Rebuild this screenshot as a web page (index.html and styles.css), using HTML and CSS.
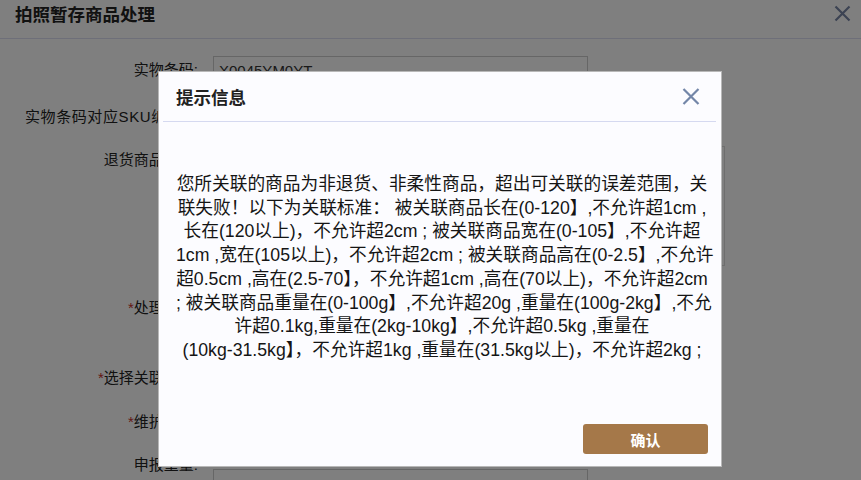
FILE: index.html
```html
<!DOCTYPE html>
<html lang="zh-CN">

<head>
    <meta charset="UTF-8">
    <meta name="viewport" content="width=device-width, initial-scale=1.0">
    <title>拍照暂存商品处理</title>
    <link rel="stylesheet" href="styles.css">
</head>

<body>
    <div class="page">
        <div class="page-head">
            <h3 class="page-title">拍照暂存商品处理</h3>
            <span class="page-close">
                <svg width="17" height="17" viewBox="0 0 17 17"><path d="M1.5 1.5L15.5 15.5M15.5 1.5L1.5 15.5" stroke="#7886a6" stroke-width="2.2" fill="none"/></svg>
            </span>
        </div>

        <form class="form">
            <div class="row row-a">
                <label class="label">实物条码:</label>
                <div class="field"><input class="input" type="text" value="X0045YM0YT" readonly></div>
            </div>
            <div class="row">
                <label class="label label-long">实物条码对应SKU编码：</label>
                <div class="field"><input class="input" type="text" readonly></div>
            </div>
            <div class="row row-pics">
                <label class="label">退货商品图片:</label>
                <div class="field"><div class="pics"></div></div>
            </div>
            <div class="row row-wide">
                <label class="label"><i class="req">*</i>处理方式:</label>
                <div class="field"><input class="input" type="text" readonly></div>
            </div>
            <div class="row row-b">
                <label class="label"><i class="req">*</i>选择关联商品:</label>
                <div class="field"><input class="input" type="text" readonly></div>
            </div>
            <div class="row">
                <label class="label"><i class="req">*</i>维护尺寸:</label>
                <div class="field"><input class="input" type="text" readonly></div>
            </div>
            <div class="row">
                <label class="label">申报重量:</label>
                <div class="field"><input class="input input-low" type="text" readonly></div>
            </div>
        </form>
    </div>

    <div class="mask"></div>

    <div class="dialog">
        <div class="dialog-head">
            <span class="dialog-title">提示信息</span>
            <span class="dialog-close">
                <svg width="18" height="17" viewBox="0 0 18 17"><path d="M1.5 1L16.5 16M16.5 1L1.5 16" stroke="#7386a8" stroke-width="2.2" fill="none"/></svg>
            </span>
        </div>
        <div class="dialog-body">
            <p class="msg">您所关联的商品为非退货、非柔性商品，超出可关联的误差范围，关<br>联失败！以下为关联标准： 被关联商品长在(0-120】,不允许超1cm ,<br>长在(120以上)，不允许超2cm ; 被关联商品宽在(0-105】,不允许超<br>1cm ,宽在(105以上)，不允许超2cm ; 被关联商品高在(0-2.5】,不允许<br>超0.5cm ,高在(2.5-70】，不允许超1cm ,高在(70以上)，不允许超2cm<br>; 被关联商品重量在(0-100g】,不允许超20g ,重量在(100g-2kg】,不允<br>许超0.1kg,重量在(2kg-10kg】,不允许超0.5kg ,重量在<br>(10kg-31.5kg】，不允许超1kg ,重量在(31.5kg以上)，不允许超2kg ;</p>
        </div>
        <div class="dialog-foot">
            <button class="btn-ok" type="button">确认</button>
        </div>
    </div>
</body>

</html>
```

FILE: styles.css
```css
* {
    margin: 0;
    padding: 0;
    box-sizing: border-box;
    font-family: "Liberation Sans", "Noto Sans CJK SC", sans-serif;
}

html,
body {
    height: 100%;
    background-color: #fff;
    color: #222;
    overflow: hidden;
}

/* underlying dialog */
.page-head {
    height: 39px;
    display: flex;
    justify-content: space-between;
    align-items: flex-start;
    padding: 0 10px 0 15px;
    border-bottom: 1px solid #dcdef2;
}

.page-title {
    font-size: 17.5px;
    font-weight: bold;
    line-height: 30px;
    color: #222;
}

.page-close {
    margin-top: 5px;
    display: flex;
}

.form {
    padding-top: 17px;
}

.row {
    display: flex;
    align-items: flex-start;
    height: 43px;
}

.row-a {
    height: 47px;
}

.row-b {
    height: 44px;
}

.row-pics {
    height: 148px;
}

.row-wide {
    height: 70px;
}

.label {
    width: 198px;
    margin-right: 15px;
    text-align: right;
    font-size: 15px;
    line-height: 28px;
    white-space: nowrap;
    color: #222;
}

.label-long {
    letter-spacing: 0.6px;
}

.req {
    font-style: normal;
    color: #c8302a;
}

.input {
    display: block;
    width: 375px;
    height: 28px;
    border: 1px solid #ccc;
    padding-left: 5px;
    font-size: 15px;
    color: #333;
    outline: none;
    background: #fff;
}

.input-low {
    margin-top: 18px;
}

.pics {
    width: 512px;
    height: 120px;
    border: 1px solid #ddd;
}

/* mask + tip dialog */
.mask {
    position: fixed;
    inset: 0;
    background-color: rgba(0, 0, 0, 0.5);
}

.dialog {
    position: fixed;
    left: 158px;
    top: 71px;
    width: 564px;
    height: 396px;
    background-color: #fcfcff;
    border: 1px solid #b8b8b8;
    display: flex;
    flex-direction: column;
}

.dialog-head {
    height: 50px;
    margin: 0 5px 0 4px;
    padding: 0 16px 0 13px;
    display: flex;
    justify-content: space-between;
    align-items: center;
    border-bottom: 1px solid #d5d9f0;
}

.dialog-title {
    font-size: 17.5px;
    font-weight: bold;
    color: #222;
}

.dialog-close {
    display: flex;
}

.dialog-body {
    flex: 1;
    padding: 51px 13px 0 17px;
}

.msg {
    text-align: center;
    font-size: 17.7px;
    line-height: 23.7px;
    color: #151515;
    white-space: nowrap;
}

.dialog-foot {
    display: flex;
    justify-content: flex-end;
    padding: 0 13px 12px 0;
}

.btn-ok {
    width: 125px;
    height: 30px;
    border: none;
    border-radius: 3px;
    background-color: #a57849;
    color: #fff;
    font-size: 15px;
    font-weight: 600;
    cursor: pointer;
}
```
